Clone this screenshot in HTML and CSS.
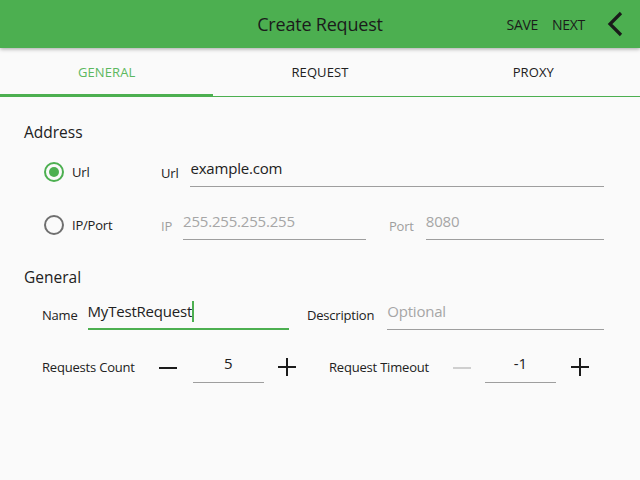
FILE: index.html
```html
<!DOCTYPE html>
<html>
<head>
<meta charset="utf-8">
<link rel="stylesheet" href="styles.css">
</head>
<body>
<header class="appbar">
  <div class="title">Create Request</div>
  <div class="actions">
    <span class="action">SAVE</span>
    <span class="action">NEXT</span>
    <svg class="back" width="16" height="26" viewBox="0 0 16 26"><path d="M14 2 L3 13 L14 24" fill="none" stroke="#1a1a1a" stroke-width="3.2"/></svg>
  </div>
</header>
<nav class="tabs">
  <div class="tab active">GENERAL</div>
  <div class="tab">REQUEST</div>
  <div class="tab">PROXY</div>
</nav>
<main class="content">
  <h2 class="section">Address</h2>
  <div class="row row-url">
    <div class="radio-opt"><span class="radio checked"></span><span class="opt-label">Url</span></div>
    <div class="field grow">
      <span class="flabel">Url</span>
      <span class="input"><span class="value">example.com</span></span>
    </div>
  </div>
  <div class="row row-ip">
    <div class="radio-opt"><span class="radio"></span><span class="opt-label">IP/Port</span></div>
    <div class="field ip">
      <span class="flabel muted">IP</span>
      <span class="input"><span class="value hint">255.255.255.255</span></span>
    </div>
    <div class="field grow port">
      <span class="flabel muted">Port</span>
      <span class="input"><span class="value hint">8080</span></span>
    </div>
  </div>
  <h2 class="section sec2">General</h2>
  <div class="row row-name">
    <div class="field name">
      <span class="flabel">Name</span>
      <span class="input focused"><span class="value">MyTestRequest</span><span class="cursor"></span></span>
    </div>
    <div class="field grow desc">
      <span class="flabel">Description</span>
      <span class="input"><span class="value hint">Optional</span></span>
    </div>
  </div>
  <div class="row row-count">
    <div class="stepper s1">
      <span class="slabel">Requests Count</span>
      <span class="minus"></span>
      <span class="num">5</span>
      <span class="plus"></span>
    </div>
    <div class="stepper s2">
      <span class="slabel">Request Timeout</span>
      <span class="minus disabled"></span>
      <span class="num">-1</span>
      <span class="plus"></span>
    </div>
  </div>
</main>
</body>
</html>
```

FILE: styles.css
```css
* { box-sizing: border-box; }
html, body { margin: 0; padding: 0; }
body {
  width: 640px;
  height: 480px;
  background: #fafafa;
  font-family: "Open Sans", "Noto Sans", sans-serif;
  color: #212121;
  overflow: hidden;
}
.appbar {
  height: 48px;
  background: #4caf50;
  position: relative;
  display: flex;
  align-items: center;
  justify-content: center;
  box-shadow: 0 1px 4px rgba(0,0,0,0.35);
  z-index: 2;
}
.title {
  font-size: 18px;
  color: #1b1b1b;
  letter-spacing: -0.2px;
}
.actions {
  position: absolute;
  right: 17px;
  top: 0;
  height: 48px;
  display: flex;
  align-items: center;
}
.action {
  font-size: 14px;
  color: #1b1b1b;
  margin-right: 14px;
  letter-spacing: -0.3px;
}
.action + .action { margin-right: 22px; }
.back { display: block; }
.tabs {
  display: flex;
  height: 49px;
  border-bottom: 1px solid #4caf50;
  position: relative;
}
.tab {
  flex: 1;
  display: flex;
  align-items: center;
  justify-content: center;
  font-size: 13px;
  color: #212121;
  letter-spacing: 0.1px;
}
.tab.active {
  color: #5cb860;
  position: relative;
}
.tab.active::after {
  content: "";
  position: absolute;
  left: 0;
  right: 0;
  bottom: 0;
  height: 2px;
  background: #4caf50;
}
.content {
  padding: 24px 36px 0 24px;
}
.section {
  margin: 0;
  font-weight: normal;
  font-size: 15.5px;
  line-height: 22px;
  color: #212121;
}
.sec2 { margin-top: 26px; }
.row {
  display: flex;
  align-items: flex-end;
}
.row-url { margin-top: 12px; padding-left: 20px; }
.row-ip { margin-top: 21px; padding-left: 20px; }
.row-name { margin-top: 10px; padding-left: 18px; }
.row-count { margin-top: 22px; padding-left: 18px; }
.radio-opt {
  width: 117px;
  display: flex;
  align-items: center;
  height: 30px;
}
.radio {
  width: 20px;
  height: 20px;
  border-radius: 50%;
  border: 2px solid #6f6f6f;
  margin-right: 8px;
  position: relative;
}
.radio.checked { border-color: #4caf50; }
.radio.checked::after {
  content: "";
  position: absolute;
  left: 3px; top: 3px;
  width: 10px; height: 10px;
  border-radius: 50%;
  background: #4caf50;
}
.opt-label { font-size: 13px; letter-spacing: -0.2px; }
.field {
  display: flex;
  align-items: flex-end;
}
.grow { flex: 1; }
.flabel, .slabel {
  font-size: 13px;
  line-height: 18px;
  letter-spacing: -0.2px;
  white-space: nowrap;
}
.flabel { margin-bottom: 5px; }
.flabel.muted { color: #9e9e9e; }
.input {
  flex: 1;
  display: flex;
  align-items: center;
  height: 32px;
  border-bottom: 1px solid #9e9e9e;
  margin-left: 12px;
  padding-bottom: 5px;
  position: relative;
}
.value { font-size: 15px; letter-spacing: -0.2px; }
.value.hint { color: #a6a6a6; }
.ip { width: 205px; }
.ip .input { margin-left: 11px; }
.port { margin-left: 23px; }
.name { width: 247px; }
.name .flabel { margin-bottom: 6px; }
.name .input { margin-left: 10px; padding-bottom: 4px; }
.input.focused { border-bottom: 2px solid #4caf50; }
.cursor {
  display: inline-block;
  width: 2px;
  height: 21px;
  background: #4caf50;
}
.desc { margin-left: 18px; }
.desc .flabel { margin-bottom: 6px; }
.desc .input { margin-left: 13px; padding-bottom: 6px; }
.stepper {
  display: flex;
  align-items: flex-start;
  height: 31px;
}
.stepper .slabel { line-height: 30px; }
.s1 { width: 287px; }
.minus, .plus {
  width: 18px;
  height: 18px;
  position: relative;
  display: inline-block;
  margin-top: 6px;
}
.minus::before, .plus::before {
  content: "";
  position: absolute;
  left: 0; right: 0;
  top: 8px; height: 2px;
  background: #1b1b1b;
}
.plus::after {
  content: "";
  position: absolute;
  top: 0; bottom: 0;
  left: 8px; width: 2px;
  background: #1b1b1b;
}
.minus { margin-top: 7px; }
.minus.disabled::before { background: #cfcfcf; }
.num {
  width: 71px;
  text-align: center;
  font-size: 15px;
  height: 31px;
  line-height: 22px;
  border-bottom: 1px solid #9e9e9e;
}
.s1 .minus { margin-left: 24px; }
.s1 .num { margin-left: 16px; margin-right: 14px; }
.s2 .minus { margin-left: 24px; }
.s2 .num { margin-left: 14px; margin-right: 15px; }
```
